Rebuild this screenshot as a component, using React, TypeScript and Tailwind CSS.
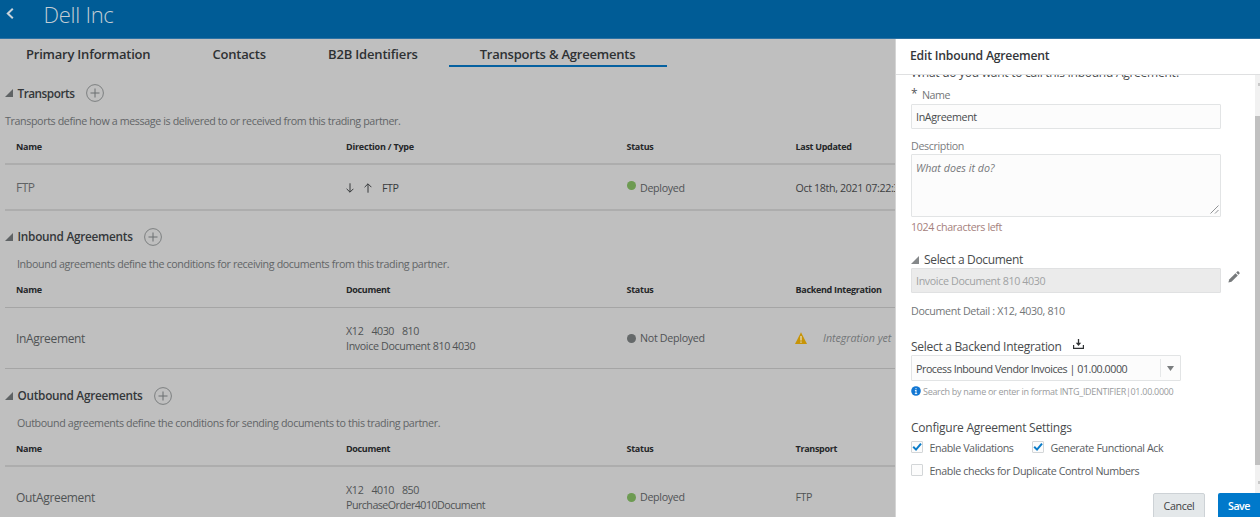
import React from "react";
import clsx from "clsx";

function Text({ className, children }: { className?: string; children: React.ReactNode }) {
  return <span className={clsx("whitespace-nowrap", className)}>{children}</span>;
}

function Triangle({ className }: { className?: string }) {
  return (
    <svg viewBox="0 0 8 8" className={clsx("h-2 w-2 shrink-0", className)}>
      <path d="M8 0V8H0Z" fill="currentColor" />
    </svg>
  );
}

function AddButton() {
  return (
    <svg viewBox="0 0 18 18" className="h-[18px] w-[18px] shrink-0 text-[#6b6e70]" fill="none" stroke="currentColor">
      <circle cx="9" cy="9" r="8.4" strokeWidth="0.8" />
      <path d="M9 4.5V13.5M4.5 9H13.5" strokeWidth="1" />
    </svg>
  );
}

function SectionTitle({ title, className, titleClass }: { title: string; className: string; titleClass: string }) {
  return (
    <div className={clsx("flex items-center pl-[5px]", className)}>
      <Triangle className="mr-[4.5px] text-[#5f6365]" />
      <Text className={clsx("mr-[11.5px] text-[11.8px] font-semibold text-[#34373a]", titleClass)}>{title}</Text>
      <AddButton />
    </div>
  );
}

const COLS = "grid grid-cols-[330px_280.5px_169px_1fr] pl-[11px] ml-[5px] items-center";

function HeaderRow({ cells, className }: { cells: [string, string][]; className: string }) {
  return (
    <div className={clsx(COLS, "text-[9px] font-bold text-[#252729]", className)}>
      {cells.map(([label, tracking]) => (
        <Text key={label} className={tracking}>
          {label}
        </Text>
      ))}
    </div>
  );
}

function Dot({ className }: { className: string }) {
  return <span className={clsx("mr-[4.5px] h-[9px] w-[9px] shrink-0 rounded-full", className)} />;
}

function ArrowIcon({ up }: { up?: boolean }) {
  return (
    <svg viewBox="0 0 8 10" className="h-[10px] w-2" fill="none" stroke="#36393b" strokeWidth="1">
      {up ? <path d="M4 9.7V0.9M0.6 4.2L4 0.8L7.4 4.2" /> : <path d="M4 0.3V9.1M0.6 5.8L4 9.2L7.4 5.8" />}
    </svg>
  );
}

function Checkbox({ checked }: { checked?: boolean }) {
  return (
    <span className="h-3 w-3 shrink-0 rounded-[1px] border border-[#d3d6d8] bg-[#fcfcfc]">
      {checked && (
        <svg viewBox="0 0 10 10" className="block h-[10px] w-[10px]" fill="none" stroke="#0a7cc9" strokeWidth="2">
          <path d="M1.2 4.8L4 7.6L9 1.6" />
        </svg>
      )}
    </span>
  );
}

function MainContent() {
  return (
    <main className="w-[895px] shrink-0 overflow-hidden bg-[#bfbfbf] text-[10.7px] text-[#505355]">
      <nav className="flex h-7 text-[13px] font-semibold text-[#2e3133]">
        <div className="flex w-[212.5px] items-center pl-[26px] pt-1">
          <Text className="tracking-[-0.22px]">Primary Information</Text>
        </div>
        <div className="flex w-[115.5px] items-center pt-1">
          <Text className="tracking-[-0.2px]">Contacts</Text>
        </div>
        <div className="flex w-[120.5px] items-center pt-1">
          <Text className="tracking-[-0.17px]">B2B Identifiers</Text>
        </div>
        <div className="flex w-[218px] items-center justify-center border-b-2 border-[#0561a0] pt-1.5">
          <Text className="tracking-[-0.21px]">Transports &amp; Agreements</Text>
        </div>
      </nav>

      <section>
        <SectionTitle title="Transports" className="mt-[11px] h-[30px]" titleClass="pt-px tracking-[-0.5px]" />
        <div className="flex h-[26px] items-center pl-[5px] text-[#626567]">
          <Text className="tracking-[-0.38px]">
            Transports define how a message is delivered to or received from this trading partner.
          </Text>
        </div>
        <HeaderRow
          className="mb-[3px] h-[26px]"
          cells={[
            ["Name", "tracking-[-0.24px]"],
            ["Direction / Type", "tracking-[-0.21px]"],
            ["Status", "tracking-[-0.26px]"],
            ["Last Updated", "tracking-[-0.31px]"],
          ]}
        />
        <div className={clsx(COLS, "h-12 border-y-2 border-[#adadad]")}>
          <Text className="pt-px text-[12px] tracking-[-0.5px] text-[#5f6264]">FTP</Text>
          <div className="flex items-center pt-0.5 text-[#383b3d]">
            <ArrowIcon />
            <span className="w-[10px]" />
            <ArrowIcon up />
            <Text className="ml-[10px] tracking-[-0.45px]">FTP</Text>
          </div>
          <div className="flex items-center pt-px">
            <Dot className="-mt-1 bg-[#6d9b52]" />
            <Text className="pt-px tracking-[-0.33px]">Deployed</Text>
          </div>
          <Text className="pt-[3px] tracking-[-0.36px] text-[#3d4042]">Oct 18th, 2021 07:22:3</Text>
        </div>
      </section>

      <section>
        <SectionTitle title="Inbound Agreements" className="mt-[11px] h-[30px]" titleClass="tracking-[-0.27px]" />
        <div className="flex h-[25px] items-center pl-[17px] text-[#626567]">
          <Text className="tracking-[-0.365px]">
            Inbound agreements define the conditions for receiving documents from this trading partner.
          </Text>
        </div>
        <HeaderRow
          className="mb-1 h-[26px]"
          cells={[
            ["Name", "tracking-[-0.24px]"],
            ["Document", "tracking-[-0.34px]"],
            ["Status", "tracking-[-0.26px]"],
            ["Backend Integration", "tracking-[-0.3px]"],
          ]}
        />
        <div className={clsx(COLS, "h-[62px] border-y border-[#a5a5a5]")}>
          <Text className="pt-px text-[12px] tracking-[-0.33px]">InAgreement</Text>
          <div className="flex flex-col pt-px leading-[15px]">
            <div className="flex gap-2">
              <Text className="tracking-[-0.3px]">X12</Text>
              <Text className="tracking-[-0.5px]">4030</Text>
              <Text className="tracking-[-0.5px]">810</Text>
            </div>
            <Text className="tracking-[-0.36px]">Invoice Document 810 4030</Text>
          </div>
          <div className="flex items-center pt-px">
            <Dot className="bg-[#65696a]" />
            <Text className="tracking-[-0.3px]">Not Deployed</Text>
          </div>
          <div className="flex items-center">
            <svg viewBox="0 0 12 12" className="-ml-[0.5px] h-3 w-3 shrink-0">
              <path d="M6 0.3L12 12H0Z" fill="#c79407" />
              <path d="M6 4V8.4M6 9.4V10.8" stroke="#e5dcc3" strokeWidth="1.3" />
            </svg>
            <Text className="ml-4 italic tracking-[-0.02px] text-[#737678]">Integration yet</Text>
          </div>
        </div>
      </section>

      <section>
        <SectionTitle title="Outbound Agreements" className="mt-[11px] h-[31px]" titleClass="tracking-[-0.28px]" />
        <div className="flex h-[25px] items-center pl-[17px] text-[#626567]">
          <Text className="tracking-[-0.363px]">
            Outbound agreements define the conditions for sending documents to this trading partner.
          </Text>
        </div>
        <HeaderRow
          className="mb-[3px] h-[26px]"
          cells={[
            ["Name", "tracking-[-0.24px]"],
            ["Document", "tracking-[-0.34px]"],
            ["Status", "tracking-[-0.26px]"],
            ["Transport", "tracking-[-0.3px]"],
          ]}
        />
        <div className={clsx(COLS, "h-[62px] border-t-2 border-[#adadad]")}>
          <Text className="pt-px text-[12px] tracking-[-0.33px]">OutAgreement</Text>
          <div className="flex flex-col pt-px leading-[15px]">
            <div className="flex gap-2">
              <Text className="tracking-[-0.3px]">X12</Text>
              <Text className="tracking-[-0.5px]">4010</Text>
              <Text className="tracking-[-0.5px]">850</Text>
            </div>
            <Text className="tracking-[-0.53px]">PurchaseOrder4010Document</Text>
          </div>
          <div className="flex items-center pt-px">
            <Dot className="bg-[#6d9b52]" />
            <Text className="tracking-[-0.33px]">Deployed</Text>
          </div>
          <Text className="pt-px tracking-[-0.45px]">FTP</Text>
        </div>
      </section>
    </main>
  );
}

function EditPanel() {
  return (
    <aside className="flex min-w-0 flex-1 flex-col border-l border-[#d5d5d5] bg-white text-[10.7px] text-[#5a5d5f]">
      <div className="flex h-9 shrink-0 items-center border-b border-[#dfe0e1] pb-px pl-[14px]">
        <Text className="text-[12.2px] font-semibold tracking-[-0.2px] text-[#34373a]">Edit Inbound Agreement</Text>
      </div>

      <div className="flex h-[418px] shrink-0 overflow-hidden">
        <div className="flex min-w-0 flex-1 flex-col pl-[15px]">
          <div className="-mt-3 flex h-5 shrink-0 items-center">
            <Text className="text-[12px] tracking-[-0.26px] text-[#484b4d]">
              What do you want to call this Inbound Agreement?
            </Text>
          </div>

          <div className="flex h-[21px] shrink-0 items-center pt-[3px] text-[#737678]">
            <Text className="-mt-0.5 w-[11px] text-[12px] text-[#55585a]">*</Text>
            <Text className="tracking-[-0.5px]">Name</Text>
          </div>
          <div className="flex h-[25px] w-[310px] shrink-0 items-center rounded-[1px] border border-[#e2e4e5] bg-[#fcfcfc] pl-1 pt-0.5 text-[#484b4d]">
            <Text className="tracking-[-0.36px]">InAgreement</Text>
          </div>

          <div className="mt-2 flex h-[17px] shrink-0 items-center pt-px text-[#7b7d7f]">
            <Text className="tracking-[-0.37px]">Description</Text>
          </div>
          <div className="flex h-[63px] w-[310px] shrink-0 justify-between rounded-[1px] border border-[#e2e4e5] bg-[#fcfcfc] pl-1 pr-px">
            <Text className="pt-[5px] italic tracking-[0.02px] text-[#77797b]">What does it do?</Text>
            <svg viewBox="0 0 9 9" className="mb-0.5 h-[9px] w-[9px] self-end" stroke="#85878a" strokeWidth="0.9">
              <path d="M0.5 8.5L8.5 0.5M5 8.5L8.5 5" />
            </svg>
          </div>
          <div className="mt-0.5 flex h-4 shrink-0 items-center text-[#a57f7d]">
            <Text className="tracking-[-0.37px]">1024 characters left</Text>
          </div>

          <div className="mt-[15px] flex h-[18px] shrink-0 items-center pt-px">
            <Triangle className="mr-[5px] text-[#85888a]" />
            <Text className="text-[12px] tracking-[-0.33px] text-[#484b4d]">Select a Document</Text>
          </div>
          <div className="flex h-[25px] shrink-0 items-start">
            <div className="flex h-[25px] w-[310px] items-center rounded-[1px] border border-[#e0e1e2] bg-[#ebebeb] pl-1 pt-px text-[#a0a2a3]">
              <Text className="tracking-[-0.36px]">Invoice Document 810 4030</Text>
            </div>
            <svg viewBox="0 0 12 12" className="ml-[6.5px] mt-[3px] h-3 w-3" fill="#777a7c">
              <path d="M0.4 11.6L1.2 8.5L7.5 2.2L9.8 4.5L3.5 10.8Z" />
              <path d="M8.2 1.6L9.2 0.6C9.7 0.1 10.2 0.1 10.6 0.6L11.4 1.4C11.9 1.8 11.9 2.3 11.4 2.8L10.4 3.8Z" />
            </svg>
          </div>
          <div className="mt-[10px] flex h-4 shrink-0 items-center text-[#737678]">
            <Text className="tracking-[-0.33px]">Document Detail : X12, 4030, 810</Text>
          </div>

          <div className="mt-[18px] flex h-[18px] shrink-0 items-center pt-px">
            <Text className="text-[12px] tracking-[-0.29px] text-[#484b4d]">Select a Backend Integration</Text>
            <svg viewBox="0 0 11 10" className="-mt-1.5 ml-[11.5px] h-[10px] w-[11px]" fill="none" stroke="#2f3234">
              <path d="M0.6 6V9.4H10.4V6" strokeWidth="1.2" />
              <path d="M5.5 0V5" strokeWidth="1.3" />
              <path d="M2.8 3.8H8.2L5.5 7Z" fill="#2f3234" stroke="none" />
            </svg>
          </div>
          <div className="flex h-[26px] w-[270px] shrink-0 items-center rounded-[1px] border border-[#e2e4e5] bg-[#fcfcfc] pl-1 text-[#484b4d]">
            <Text className="flex-1 pt-0.5 tracking-[-0.46px]">Process Inbound Vendor Invoices | 01.00.0000</Text>
            <div className="flex h-[18px] w-5 items-center justify-center border-l border-[#e6e8e9]">
              <svg viewBox="0 0 7 5" className="h-[5px] w-[7px]">
                <path d="M0 0H7L3.5 5Z" fill="#7a7d7f" />
              </svg>
            </div>
          </div>
          <div className="mt-[3px] flex h-4 shrink-0 items-center">
            <svg viewBox="0 0 10 10" className="-mt-[3px] mr-[2px] h-[10px] w-[10px]">
              <circle cx="5" cy="5" r="4.8" fill="#1277d3" />
              <path d="M5 2V3.3M5 4.1V7.8M3.9 4.5H5.3M3.8 7.6H6.2" stroke="#fff" strokeWidth="0.9" />
            </svg>
            <Text className="text-[9px] tracking-[-0.3px] text-[#999b9d]">
              Search by name or enter in format INTG_IDENTIFIER|01.00.0000
            </Text>
          </div>

          <div className="mt-[18px] flex h-[19px] shrink-0 items-center">
            <Text className="text-[12px] tracking-[-0.24px] text-[#484b4d]">Configure Agreement Settings</Text>
          </div>
          <div className="mt-0.5 flex h-4 shrink-0 items-center">
            <Checkbox checked />
            <Text className="ml-[6.5px] w-[102.5px] pt-0.5 tracking-[-0.4px]">Enable Validations</Text>
            <Checkbox checked />
            <Text className="ml-[6.5px] pt-0.5 tracking-[-0.37px]">Generate Functional Ack</Text>
          </div>
          <div className="mt-[7px] flex h-4 shrink-0 items-center">
            <Checkbox />
            <Text className="ml-[6.5px] pt-0.5 tracking-[-0.38px]">Enable checks for Duplicate Control Numbers</Text>
          </div>
        </div>

        <div className="flex w-[5px] shrink-0 flex-col items-end bg-[#f1f1f1]">
          <div className="mt-2 h-[3px] w-[2px] bg-[#c8c8c8]" />
          <div className="mt-[30px] h-[349px] w-full bg-[#c1c1c1]" />
          <div className="mt-4 h-[3px] w-[2px] bg-[#c8c8c8]" />
        </div>
      </div>

      <div className="flex h-6 shrink-0 justify-end gap-[13px] overflow-hidden">
        <button className="h-[26px] w-[52px] shrink-0 rounded-[2px] border border-[#cdd2d6] bg-[#e4e8ea] text-[#3f4244]">
          <Text className="tracking-[-0.35px]">Cancel</Text>
        </button>
        <button className="h-[26px] w-[42px] shrink-0 rounded-l-[2px] bg-[#0079cb] font-semibold text-white">
          <Text className="tracking-[-0.5px]">Save</Text>
        </button>
      </div>
    </aside>
  );
}

export default function App() {
  return (
    <div className="flex h-[517px] w-[1260px] flex-col overflow-hidden font-['Open_Sans',sans-serif]">
      <header className="flex h-[39px] shrink-0 items-center border-b border-[#2c72a4] bg-[#005c96] pb-[11px] pl-1.5 text-[#c3cdd4]">
        <svg viewBox="0 0 8 11" className="h-[11px] w-2" fill="none" stroke="#c9d3da" strokeWidth="2">
          <path d="M6.8 0.8L1.8 5.5L6.8 10.2" />
        </svg>
        <Text className="ml-[29.5px] text-[22px] font-light leading-none tracking-[-0.28px]">Dell Inc</Text>
      </header>
      <div className="flex h-[478px]">
        <MainContent />
        <EditPanel />
      </div>
    </div>
  );
}
